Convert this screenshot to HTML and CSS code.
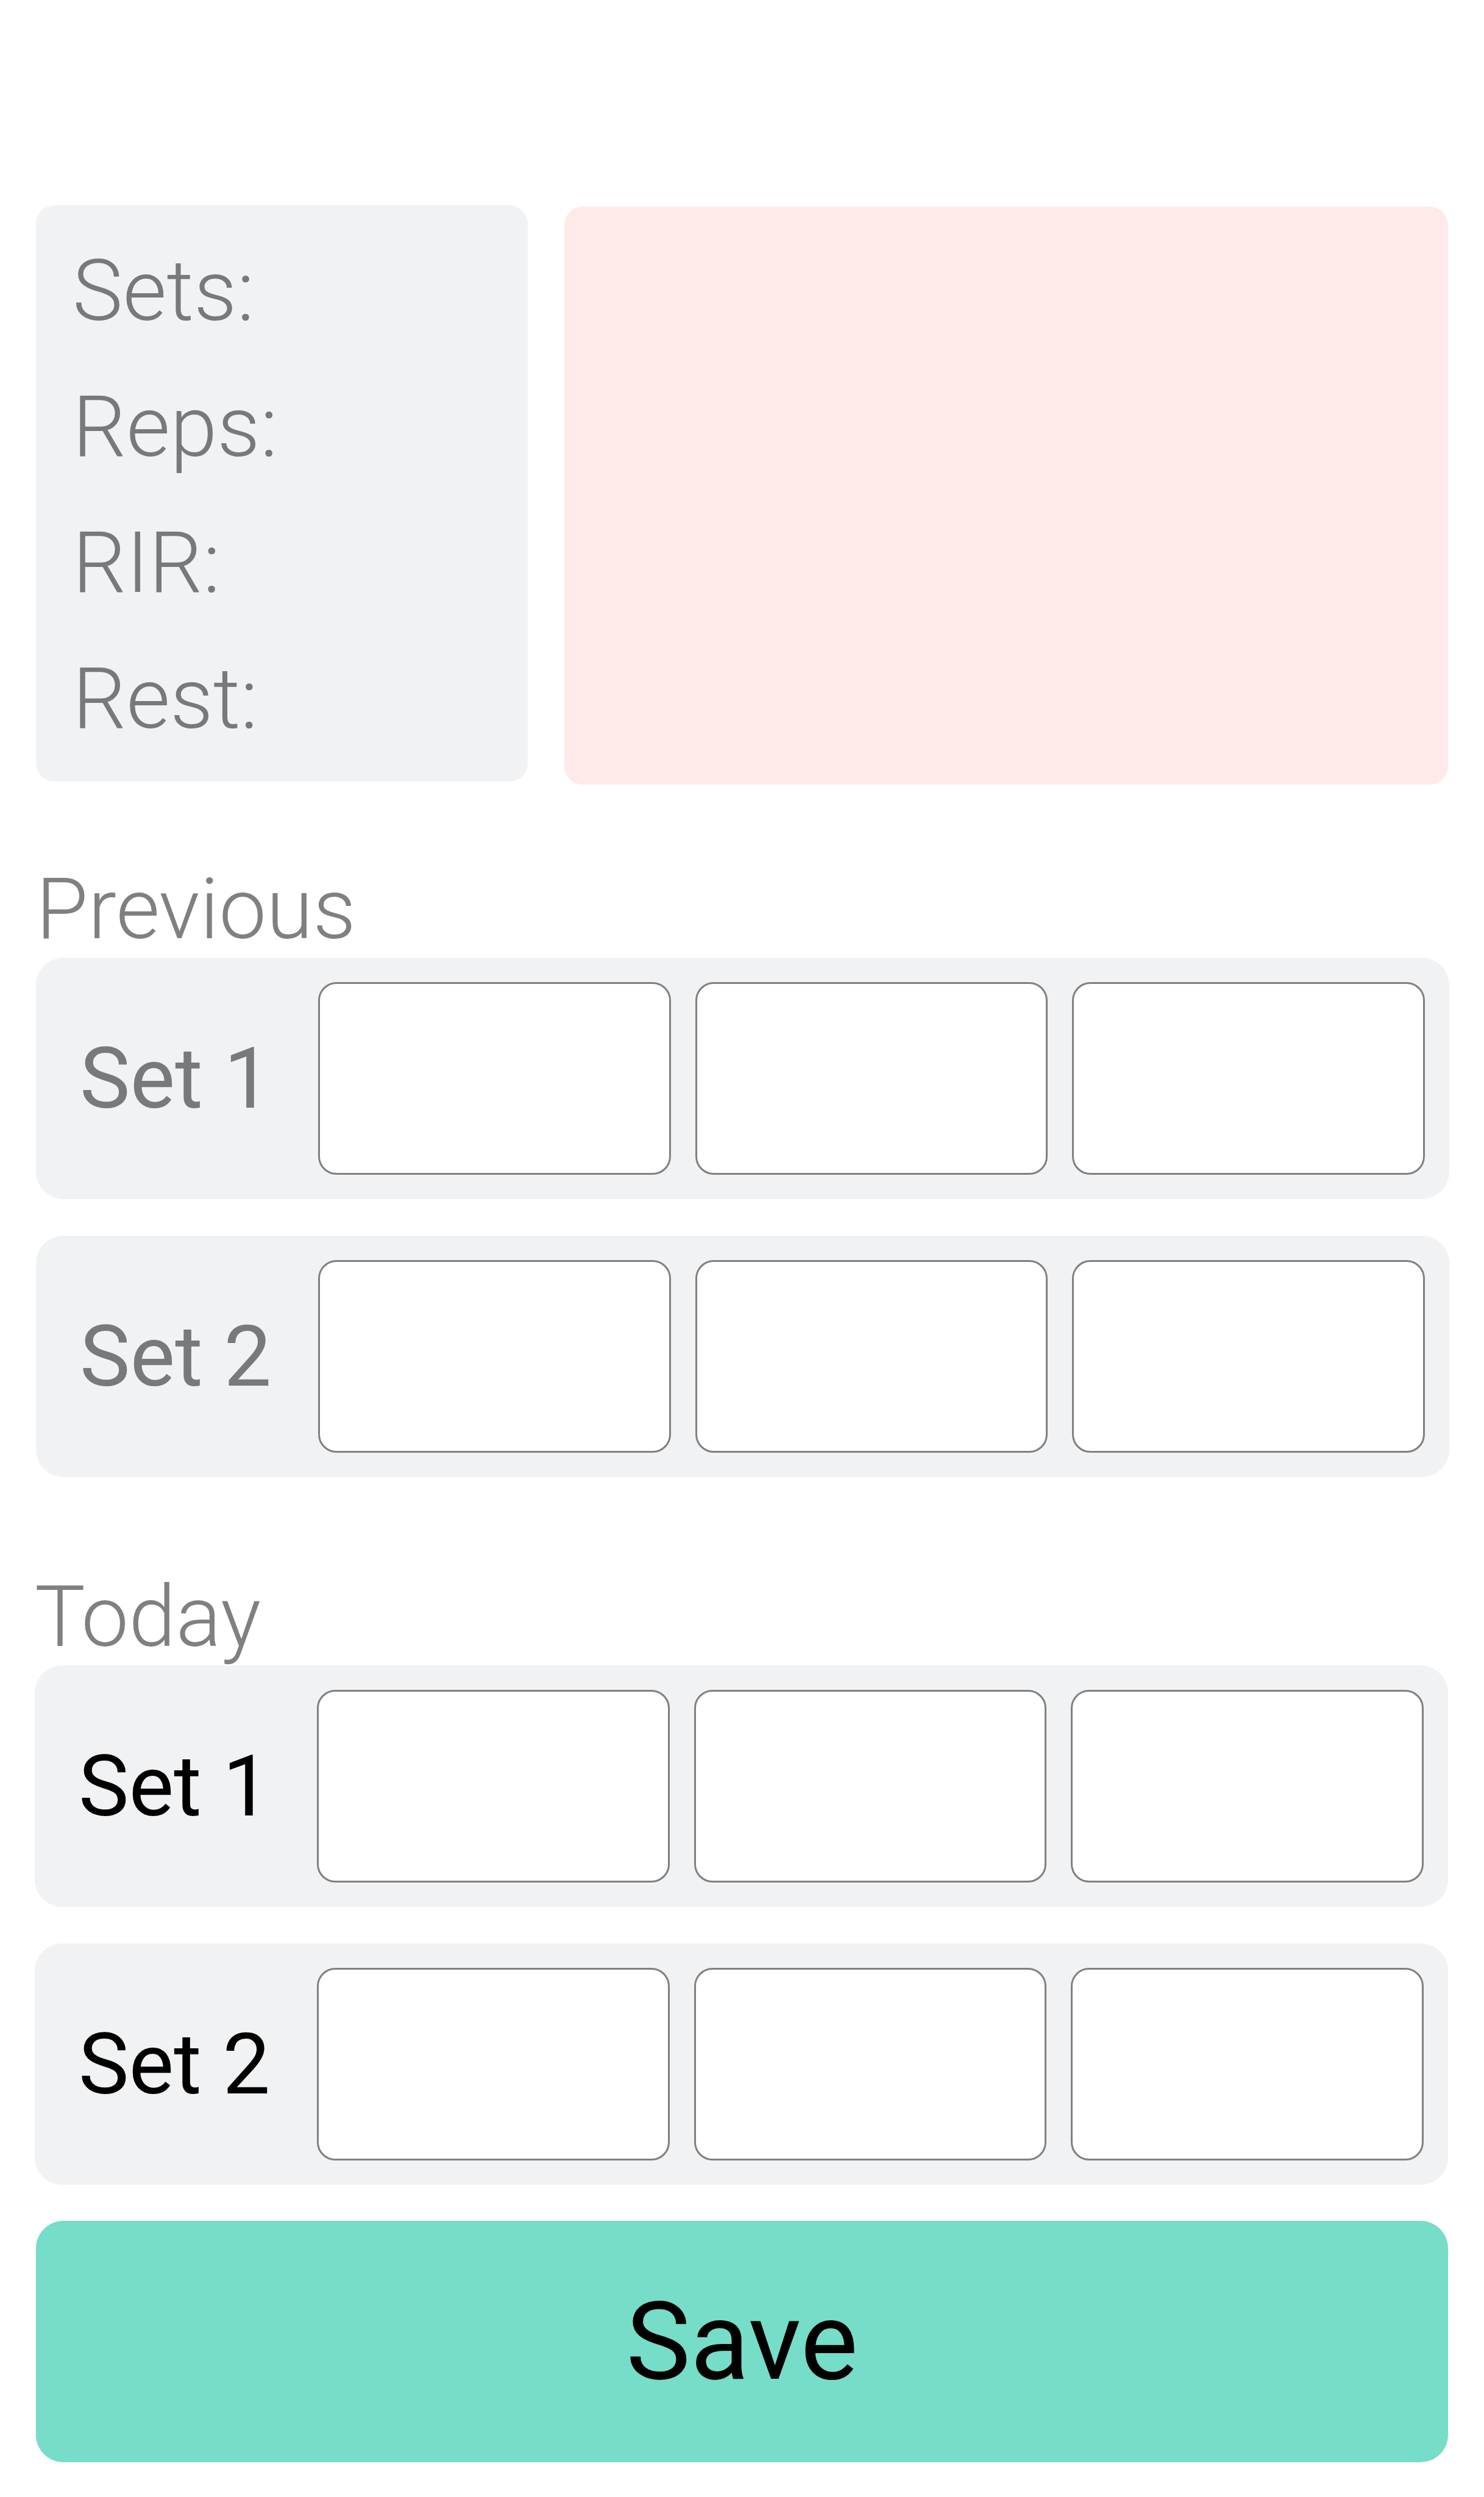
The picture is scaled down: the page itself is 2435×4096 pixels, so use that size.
FILE: index.html
```
<!DOCTYPE html>
<html lang="en">
<head>
  <meta charset="utf-8">
  <meta name="viewport" content="width=device-width, initial-scale=1">
  <title>Sets</title>
  <link rel="stylesheet" href="styles.css">
</head>
<body>
  <main class="page">
    <section class="overview">
      <ul class="targets">
        <li>Sets:</li>
        <li>Reps:</li>
        <li>RIR:</li>
        <li>Rest:</li>
      </ul>
      <div class="media"></div>
    </section>

    <section class="log log-previous">
      <h2 class="log-title">Previous</h2>
      <div class="log-rows">
        <div class="set-row">
          <label class="set-label" id="previous-1" for="previous-1-a">Set 1</label>
          <input class="set-field" type="text" id="previous-1-a">
          <input class="set-field" type="text" aria-labelledby="previous-1">
          <input class="set-field" type="text" aria-labelledby="previous-1">
        </div>
        <div class="set-row">
          <label class="set-label" id="previous-2" for="previous-2-a">Set 2</label>
          <input class="set-field" type="text" id="previous-2-a">
          <input class="set-field" type="text" aria-labelledby="previous-2">
          <input class="set-field" type="text" aria-labelledby="previous-2">
        </div>
      </div>
    </section>

    <form class="today-form">
      <section class="log log-today">
        <h2 class="log-title">Today</h2>
        <div class="log-rows">
          <div class="set-row">
            <label class="set-label" id="today-1" for="today-1-a">Set 1</label>
            <input class="set-field" type="text" id="today-1-a">
            <input class="set-field" type="text" aria-labelledby="today-1">
            <input class="set-field" type="text" aria-labelledby="today-1">
          </div>
          <div class="set-row">
            <label class="set-label" id="today-2" for="today-2-a">Set 2</label>
            <input class="set-field" type="text" id="today-2-a">
            <input class="set-field" type="text" aria-labelledby="today-2">
            <input class="set-field" type="text" aria-labelledby="today-2">
          </div>
        </div>
      </section>
      <button class="save" type="button">Save</button>
    </form>
  </main>
</body>
</html>
```
FILE: styles.css
```
* {
  box-sizing: border-box;
}

body {
  margin: 0;
  background: #ffffff;
  color: #000000;
  font-family: Roboto, "Liberation Sans", sans-serif;
  font-size: 139px;
  line-height: 163px;
}

.page {
  padding: 337px 57px 57px;
}

/* Exercise targets beside the media area */
.overview {
  display: grid;
  grid-template-columns: 807fr 1450fr;
  gap: 60px;
  padding: 0 2px;
}

.targets {
  display: flex;
  flex-direction: column;
  gap: 60px;
  margin: 0 0 5px;
  padding: 59px 60px 54px;
  list-style: none;
  border-radius: 30px;
  background: #f0f2f4;
  color: #78797a;
  font-weight: 300;
}

.media {
  margin-top: 2px;
  border-radius: 30px;
  background: #ffeae9;
}

/* Set logs */
.log-title {
  margin: 0;
  color: #808080;
  font-size: 139px;
  font-weight: 300;
  line-height: 158px;
}

.log-previous {
  margin-top: 126px;
  padding-left: 2px;
}

.log-today {
  margin-top: 151px;
  padding-right: 2px;
}

.log-rows {
  display: flex;
  flex-direction: column;
  gap: 60px;
}

.set-row {
  display: grid;
  grid-template-columns: 351px repeat(3, 1fr);
  align-items: center;
  gap: 40px;
  padding: 40px 40px 40px 72px;
  border-radius: 45px;
  background: #f0f2f4;
}

.log-previous .set-label {
  color: #78797a;
}

.set-field {
  width: 100%;
  min-width: 0;
  height: 316px;
  padding: 0 40px;
  border: 3px solid #808080;
  border-radius: 30px;
  background: #ffffff;
  color: inherit;
  font: inherit;
}

.today-form {
  margin: 0;
}

.save {
  display: block;
  width: calc(100% - 4px);
  margin: 59px 2px 0;
  padding: 93px 60px;
  border: 0;
  border-radius: 45px;
  background: #76ddc8;
  color: #000000;
  font-family: inherit;
  font-size: 178px;
  font-weight: 400;
  line-height: 210px;
}
```
